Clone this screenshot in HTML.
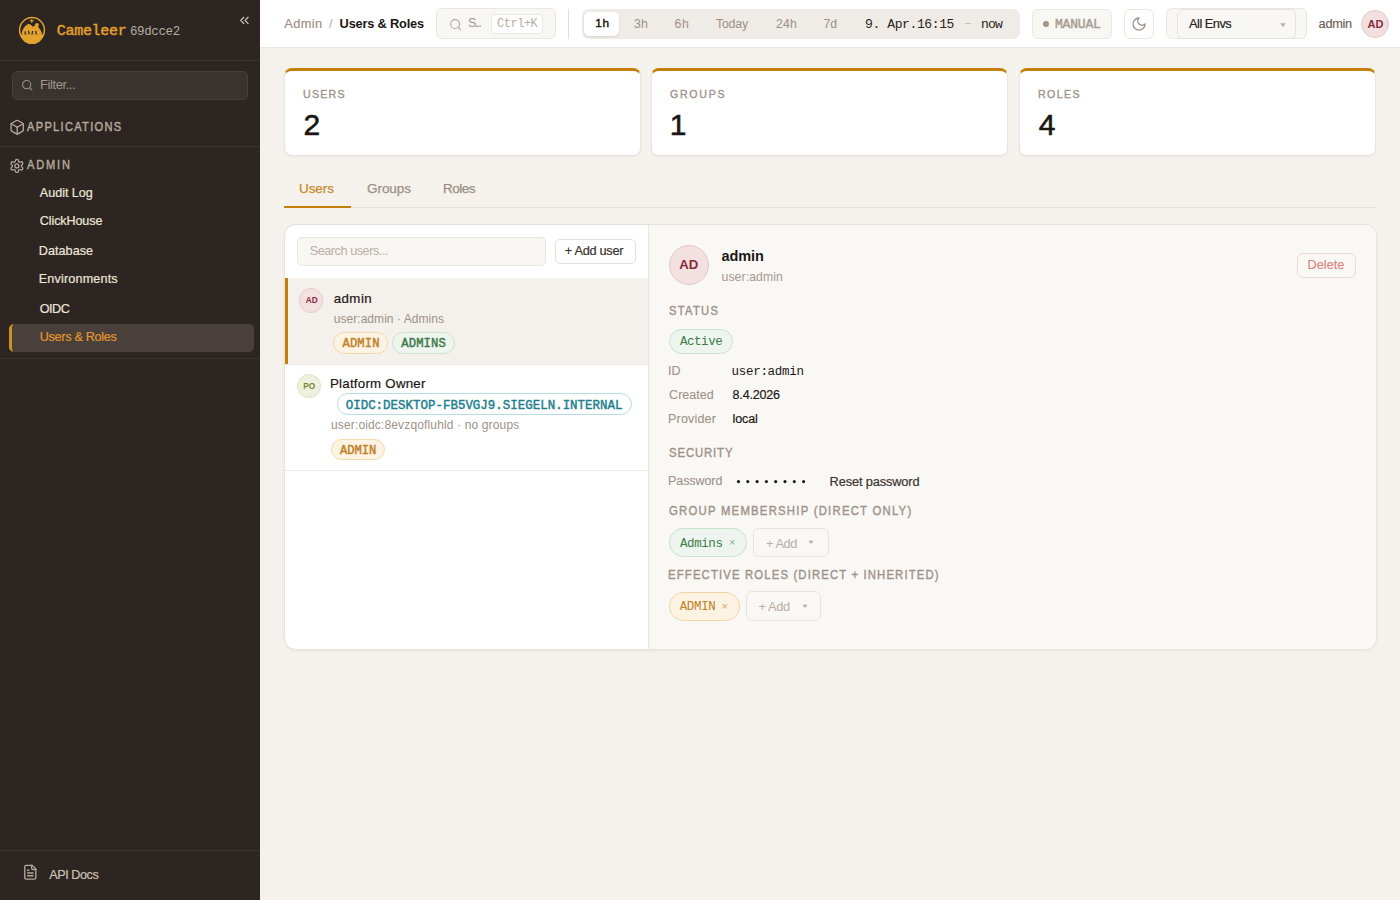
<!DOCTYPE html>
<html><head><meta charset="utf-8">
<style>
*{box-sizing:border-box;margin:0;padding:0}
html,body{width:1400px;height:900px;overflow:hidden}
body{font-family:"Liberation Sans",sans-serif;background:#f5f2ed;position:relative;color:#1c1714}
.abs{position:absolute}
#sb{position:absolute;left:0;top:0;width:260px;height:900px;background:#2d2521}
.sbline{position:absolute;left:0;width:260px;height:1px;background:#3b332e}
#top{position:absolute;left:260px;top:0;width:1140px;height:48px;background:#fff;border-bottom:1px solid #ebe6df}
.card{position:absolute;top:68px;width:357px;height:88px;background:#fff;border-radius:8px;border:1px solid #e9e4dd;border-top:3px solid #c47e0c;box-shadow:0 1px 2px rgba(60,40,20,.05)}
.pillb{position:absolute;border:1px solid;border-radius:11px}
.t{position:absolute;white-space:nowrap}
</style></head><body>

<div id="sb">
  <svg class="abs" style="left:18px;top:16px" width="28" height="28" viewBox="0 0 28 28">
    <circle cx="14" cy="14" r="12.4" fill="none" stroke="#e3a12e" stroke-width="1.5"/>
    <path d="M1.9 18.6 A12.4 12.4 0 0 0 26.1 18.6 Z" fill="#e3a12e"/>
    <path d="M3.6 18.8 C4 14 6.5 9.5 9.8 8.2 C11.8 7.6 13.2 8.8 14.3 10.6 L16.2 10.2 L17.8 7.2 L19.6 7 L21 8.6 L20.2 11 C22 12.6 23.6 15.4 24.2 18.8 Z" fill="#e3a12e"/>
    <path d="M13.8 2.6 l0.8 1.7 l1.8 0.6 l-1.8 0.6 l-0.8 1.7 l-0.8 -1.7 l-1.8 -0.6 l1.8 -0.6z" fill="#e3a12e"/>
    <path d="M7.2 15.2 v3.2 M10.4 14.6 l0.8 3.6 M14.6 15 l-0.6 3.4 M17.6 15 l0.8 3.2" stroke="#2d2521" stroke-width="1.2"/>
  </svg>
  <svg class="abs" style="left:236.90px;top:13.00px" width="14.80" height="14.80" viewBox="0 0 24 24" fill="none" stroke="#cbbfb3" stroke-width="2.10" stroke-linecap="round" stroke-linejoin="round"><path d="m11 17-5-5 5-5"/><path d="m18 17-5-5 5-5"/></svg>
  <div class="sbline" style="top:60px"></div>
  <div class="abs" style="left:12px;top:71px;width:236px;height:29px;background:#393330;border:1px solid #45403b;border-radius:5px"></div>
  <svg class="abs" style="left:21.00px;top:79.00px" width="12.40" height="12.40" viewBox="0 0 24 24" fill="none" stroke="#9d9188" stroke-width="2.10" stroke-linecap="round" stroke-linejoin="round"><circle cx="11" cy="11" r="8"/><path d="m21 21-4.3-4.3"/></svg>
  <svg class="abs" style="left:8.50px;top:119.20px" width="16.40" height="16.40" viewBox="0 0 24 24" fill="none" stroke="#b5a99e" stroke-width="1.90" stroke-linecap="round" stroke-linejoin="round"><path d="M21 8a2 2 0 0 0-1-1.73l-7-4a2 2 0 0 0-2 0l-7 4A2 2 0 0 0 3 8v8a2 2 0 0 0 1 1.73l7 4a2 2 0 0 0 2 0l7-4A2 2 0 0 0 21 16Z"/><path d="m3.3 7 8.7 5 8.7-5"/><path d="M12 22V12"/></svg>
  <div class="sbline" style="top:146px"></div>
  <svg class="abs" style="left:9.05px;top:158.00px" width="15.80" height="15.80" viewBox="0 0 24 24" fill="none" stroke="#b5a99e" stroke-width="1.90" stroke-linecap="round" stroke-linejoin="round"><path d="M12.22 2h-.44a2 2 0 0 0-2 2v.18a2 2 0 0 1-1 1.73l-.43.25a2 2 0 0 1-2 0l-.15-.08a2 2 0 0 0-2.73.73l-.22.38a2 2 0 0 0 .73 2.73l.15.1a2 2 0 0 1 1 1.72v.51a2 2 0 0 1-1 1.74l-.15.09a2 2 0 0 0-.73 2.73l.22.38a2 2 0 0 0 2.73.73l.15-.08a2 2 0 0 1 2 0l.43.25a2 2 0 0 1 1 1.73V20a2 2 0 0 0 2 2h.44a2 2 0 0 0 2-2v-.18a2 2 0 0 1 1-1.73l.43-.25a2 2 0 0 1 2 0l.15.08a2 2 0 0 0 2.73-.73l.22-.39a2 2 0 0 0-.73-2.73l-.15-.08a2 2 0 0 1-1-1.74v-.5a2 2 0 0 1 1-1.74l.15-.09a2 2 0 0 0 .73-2.73l-.22-.38a2 2 0 0 0-2.73-.73l-.15.08a2 2 0 0 1-2 0l-.43-.25a2 2 0 0 1-1-1.73V4a2 2 0 0 0-2-2z"/><circle cx="12" cy="12" r="3"/></svg>
  <div class="abs" style="left:9px;top:324px;width:245px;height:28px;background:#4a403b;border-radius:5px;border-left:3px solid #d18f1f"></div>
  <div class="sbline" style="top:358px"></div>
  <div class="sbline" style="top:850px"></div>
  <svg class="abs" style="left:21.70px;top:864.40px" width="16.60" height="16.60" viewBox="0 0 24 24" fill="none" stroke="#b5a99e" stroke-width="1.90" stroke-linecap="round" stroke-linejoin="round"><path d="M15 2H6a2 2 0 0 0-2 2v16a2 2 0 0 0 2 2h12a2 2 0 0 0 2-2V7Z"/><path d="M14 2v4a2 2 0 0 0 2 2h4"/><path d="M10 9H8"/><path d="M16 13H8"/><path d="M16 17H8"/></svg>
</div>
<div id="top"></div>
<div class="abs" style="left:436px;top:8px;width:120px;height:31px;background:#f9f7f4;border:1px solid #ebe6df;border-radius:6px"></div>
<svg class="abs" style="left:448.50px;top:18.20px" width="13.30" height="13.30" viewBox="0 0 24 24" fill="none" stroke="#b3a79d" stroke-width="2.00" stroke-linecap="round" stroke-linejoin="round"><circle cx="11" cy="11" r="8"/><path d="m21 21-4.3-4.3"/></svg>
<div class="abs" style="left:491px;top:13.5px;width:52px;height:20px;background:#fff;border:1px solid #ebe6df;border-radius:4px"></div>
<div class="abs" style="left:568px;top:9px;width:1px;height:30px;background:#e3ddd6"></div>
<div class="abs" style="left:582px;top:9px;width:438px;height:30px;background:#efebe6;border-radius:7px"></div>
<div class="abs" style="left:584px;top:12px;width:35px;height:24px;background:#fff;border-radius:5px;box-shadow:0 1px 2px rgba(60,40,20,.12)"></div>
<div class="abs" style="left:965px;top:23px;width:6px;height:1px;background:#c9c1b9"></div>
<div class="abs" style="left:1032px;top:8.5px;width:80px;height:30px;background:#f9f7f4;border:1px solid #ebe6df;border-radius:6px"></div>
<div class="abs" style="left:1043px;top:20.6px;width:6px;height:6px;background:#a09488;border-radius:3px"></div>
<div class="abs" style="left:1124px;top:8.5px;width:30px;height:30px;background:#fff;border:1px solid #ebe6df;border-radius:6px"></div>
<svg class="abs" style="left:1130.50px;top:16.00px" width="16.10" height="16.10" viewBox="0 0 24 24" fill="none" stroke="#9d9087" stroke-width="1.90" stroke-linecap="round" stroke-linejoin="round"><path d="M12 3a6 6 0 0 0 9 9 9 9 0 1 1-9-9Z"/></svg>
<div class="abs" style="left:1166px;top:8px;width:141px;height:31px;background:#f9f7f4;border:1px solid #ebe6df;border-radius:6px"></div>
<div class="abs" style="left:1177px;top:9px;width:119px;height:30px;background:#f9f7f4;border:1px solid #e8e2db;border-radius:6px"></div>
<svg class="abs" style="left:1279.5px;top:22.5px" width="6" height="5" viewBox="0 0 6 5"><path d="M0.3 0.3 H5.7 L3 4.3Z" fill="#b8ada3"/></svg>
<div class="abs" style="left:1361px;top:10px;width:28px;height:28px;background:#f2dfdf;border:1px solid #e8c9cb;border-radius:50%"></div>

<div class="card" style="left:284px"></div>
<div class="card" style="left:651px"></div>
<div class="card" style="left:1019px"></div>

<div class="abs" style="left:284px;top:207px;width:1092px;height:1px;background:#e9e3dc"></div>
<div class="abs" style="left:284px;top:206px;width:67px;height:2px;background:#c47e0c"></div>

<div class="abs" style="left:283.5px;top:223.5px;width:1093px;height:426px;background:#fff;border:1px solid #e6e1da;border-radius:12px;overflow:hidden;box-shadow:0 1px 3px rgba(60,40,20,.06)">
  <div class="abs" style="left:363px;top:0;width:730px;height:426px;background:#faf8f5;border-left:1px solid #e9e4dd"></div>
  <div class="abs" style="left:0;top:53px;width:363px;height:86px;background:#f4f0eb;border-left:3px solid #c47e0c"></div>
  <div class="abs" style="left:0;top:139px;width:363px;height:1px;background:#eee9e3"></div>
  <div class="abs" style="left:0;top:245.5px;width:363px;height:1px;background:#eee9e3"></div>
</div>
<div class="abs" style="left:296.5px;top:236.5px;width:249px;height:29px;background:#f9f7f4;border:1px solid #ebe5de;border-radius:5px"></div>
<div class="abs" style="left:554.5px;top:238.5px;width:81px;height:25px;background:#fff;border:1px solid #e6e0d8;border-radius:5px"></div>
<div class="abs" style="left:299px;top:288.3px;width:24.3px;height:24.3px;background:#f3e0e0;border:1px solid #e6c8ca;border-radius:50%"></div>
<div class="pillb" style="left:333px;top:332px;width:55px;height:21.5px;background:#fdf3e3;border-color:#f2d9b0"></div>
<div class="pillb" style="left:392px;top:332px;width:63px;height:21.5px;background:#eef5ee;border-color:#cfe3d0"></div>
<div class="abs" style="left:296.7px;top:373.9px;width:24.3px;height:24.3px;background:#eef0e0;border:1px solid #dde2c8;border-radius:50%"></div>
<div class="pillb" style="left:336.5px;top:393px;width:295px;height:22px;background:#fff;border-color:#b9dde4"></div>
<div class="pillb" style="left:330.7px;top:438.6px;width:54.6px;height:21px;background:#fdf3e3;border-color:#f2d9b0"></div>

<div class="abs" style="left:668.5px;top:245px;width:40.4px;height:40.4px;background:#f3e1e1;border:1px solid #e5c6c8;border-radius:50%"></div>
<div class="abs" style="left:1297px;top:252.5px;width:58.5px;height:25px;border:1px solid #f2d9d4;border-radius:6px"></div>
<div class="pillb" style="left:668.8px;top:328.6px;width:64.5px;height:25.2px;background:#eef5ee;border-color:#cbe3cc;border-radius:13px"></div>
<svg class="abs" style="left:735px;top:478px" width="72" height="8" viewBox="0 0 72 8"><circle cx="3.50" cy="3.6" r="1.55" fill="#1c1714"/><circle cx="12.80" cy="3.6" r="1.55" fill="#1c1714"/><circle cx="22.10" cy="3.6" r="1.55" fill="#1c1714"/><circle cx="31.40" cy="3.6" r="1.55" fill="#1c1714"/><circle cx="40.70" cy="3.6" r="1.55" fill="#1c1714"/><circle cx="50.00" cy="3.6" r="1.55" fill="#1c1714"/><circle cx="59.30" cy="3.6" r="1.55" fill="#1c1714"/><circle cx="68.60" cy="3.6" r="1.55" fill="#1c1714"/></svg>
<div class="pillb" style="left:668.6px;top:528.4px;width:78.4px;height:28.6px;background:#eef5ee;border-color:#c9e2ca;border-radius:14px"></div>
<div class="abs" style="left:753.4px;top:528px;width:75.2px;height:29px;border:1px solid #e8e4df;border-radius:6px"></div>
<svg class="abs" style="left:808px;top:540px" width="6" height="5" viewBox="0 0 6 5"><path d="M0.5 0.8 H5.5 L3 4Z" fill="#b8aea5"/></svg>
<div class="pillb" style="left:668.6px;top:591.5px;width:71.4px;height:29.1px;background:#fdf3e2;border-color:#f0d5a8;border-radius:14px"></div>
<div class="abs" style="left:746.4px;top:591px;width:75px;height:29.5px;border:1px solid #e8e4df;border-radius:6px"></div>
<svg class="abs" style="left:801.5px;top:603.5px" width="6" height="5" viewBox="0 0 6 5"><path d="M0.5 0.8 H5.5 L3 4Z" fill="#b8aea5"/></svg>

<div class="t" style='left:56.80px;top:21.50px;font:normal 15px/20px "Liberation Mono",monospace;color:#e3a12e;letter-spacing:-0.301px;-webkit-text-stroke:0.45px currentColor'>Cameleer</div>
<div class="t" style='left:130.00px;top:24.00px;font:normal 12.5px/16px "Liberation Mono",monospace;color:#b7aca2;letter-spacing:-0.385px'>69dcce2</div>
<div class="t" style='left:40.00px;top:76.00px;font:normal 13px/17px "Liberation Sans",sans-serif;color:#a0958b;letter-spacing:-0.424px'>Filter...</div>
<div class="t" style='left:27.40px;top:119.00px;font:normal 12.3px/16px "Liberation Sans",sans-serif;color:#b8ab9f;letter-spacing:1.458px;-webkit-text-stroke:0.4px currentColor;transform:scaleX(0.900);transform-origin:0.00px 0'>APPLICATIONS</div>
<div class="t" style='left:27.40px;top:157.00px;font:normal 12.3px/16px "Liberation Sans",sans-serif;color:#b8ab9f;letter-spacing:2.037px;-webkit-text-stroke:0.4px currentColor;transform:scaleX(0.900);transform-origin:0.00px 0'>ADMIN</div>
<div class="t" style='left:39.80px;top:184.90px;font:normal 12.6px/16px "Liberation Sans",sans-serif;color:#ede5db;letter-spacing:-0.026px;-webkit-text-stroke:0.2px currentColor'>Audit Log</div>
<div class="t" style='left:39.80px;top:212.90px;font:normal 12.6px/16px "Liberation Sans",sans-serif;color:#ede5db;letter-spacing:-0.120px;-webkit-text-stroke:0.2px currentColor'>ClickHouse</div>
<div class="t" style='left:38.80px;top:242.70px;font:normal 12.6px/16px "Liberation Sans",sans-serif;color:#ede5db;letter-spacing:0.056px;-webkit-text-stroke:0.2px currentColor'>Database</div>
<div class="t" style='left:38.80px;top:271.00px;font:normal 12.6px/16px "Liberation Sans",sans-serif;color:#ede5db;letter-spacing:0.164px;-webkit-text-stroke:0.2px currentColor'>Environments</div>
<div class="t" style='left:39.80px;top:301.00px;font:normal 12.6px/16px "Liberation Sans",sans-serif;color:#ede5db;letter-spacing:-0.500px;-webkit-text-stroke:0.2px currentColor'>OIDC</div>
<div class="t" style='left:39.80px;top:329.10px;font:normal 12.6px/16px "Liberation Sans",sans-serif;color:#e3962a;letter-spacing:-0.290px;-webkit-text-stroke:0.2px currentColor'>Users &amp; Roles</div>
<div class="t" style='left:49.20px;top:867.40px;font:normal 12.6px/16px "Liberation Sans",sans-serif;color:#cdc2b6;letter-spacing:-0.428px;-webkit-text-stroke:0.2px currentColor'>API Docs</div>
<div class="t" style='left:284.30px;top:14.90px;font:normal 12.8px/17px "Liberation Sans",sans-serif;color:#9d9087;letter-spacing:0.386px;-webkit-text-stroke:0.2px currentColor'>Admin</div>
<div class="t" style='left:329.00px;top:14.90px;font:normal 12.8px/17px "Liberation Sans",sans-serif;color:#b5aba2'>/</div>
<div class="t" style='left:339.60px;top:14.90px;font:bold 12.8px/17px "Liberation Sans",sans-serif;color:#1c1714;letter-spacing:-0.188px'>Users &amp; Roles</div>
<div class="t" style='left:467.90px;top:14.90px;font:normal 12.5px/16px "Liberation Sans",sans-serif;color:#a09489;letter-spacing:-1.594px'>S...</div>
<div class="t" style='left:497.00px;top:16.10px;font:normal 12px/16px "Liberation Mono",monospace;color:#b8aea4;letter-spacing:-0.481px'>Ctrl+K</div>
<div class="t" style='left:595.30px;top:16.30px;font:normal 11.8px/15px "Liberation Sans",sans-serif;color:#1c1714;-webkit-text-stroke:0.45px currentColor;letter-spacing:0.7px'>1h</div>
<div class="t" style='left:634.00px;top:15.80px;font:normal 12.3px/16px "Liberation Sans",sans-serif;color:#9d9087;letter-spacing:0.161px'>3h</div>
<div class="t" style='left:674.50px;top:15.80px;font:normal 12.3px/16px "Liberation Sans",sans-serif;color:#9d9087;letter-spacing:0.661px'>6h</div>
<div class="t" style='left:716.00px;top:15.90px;font:normal 12.3px/16px "Liberation Sans",sans-serif;color:#9d9087;letter-spacing:-0.191px'>Today</div>
<div class="t" style='left:776.00px;top:15.90px;font:normal 12.3px/16px "Liberation Sans",sans-serif;color:#9d9087;letter-spacing:0.111px'>24h</div>
<div class="t" style='left:823.40px;top:15.90px;font:normal 12.3px/16px "Liberation Sans",sans-serif;color:#9d9087'>7d</div>
<div class="t" style='left:865.00px;top:15.90px;font:normal 13px/17px "Liberation Mono",monospace;color:#2a2420;letter-spacing:-0.383px'>9. Apr.16:15</div>
<div class="t" style='left:981.00px;top:15.90px;font:normal 13px/17px "Liberation Mono",monospace;color:#2a2420;letter-spacing:-0.801px'>now</div>
<div class="t" style='left:1055.00px;top:15.90px;font:normal 13px/17px "Liberation Mono",monospace;color:#a89c90;letter-spacing:-0.201px;-webkit-text-stroke:0.45px currentColor'>MANUAL</div>
<div class="t" style='left:1189.00px;top:15.20px;font:normal 12.8px/17px "Liberation Sans",sans-serif;color:#2a2420;letter-spacing:-0.500px;-webkit-text-stroke:0.2px currentColor'>All Envs</div>
<div class="t" style='left:1318.60px;top:14.50px;font:normal 12.8px/17px "Liberation Sans",sans-serif;color:#6b6058;letter-spacing:-0.334px;-webkit-text-stroke:0.15px currentColor'>admin</div>
<div class="t" style='left:1367.50px;top:17.30px;font:bold 11px/14px "Liberation Sans",sans-serif;color:#8a2d3a'>AD</div>
<div class="t" style='left:302.80px;top:87.40px;font:normal 11.8px/15px "Liberation Sans",sans-serif;color:#a0948a;letter-spacing:1.362px;-webkit-text-stroke:0.4px currentColor;transform:scaleX(0.900);transform-origin:0.00px 0'>USERS</div>
<div class="t" style='left:670.00px;top:87.40px;font:normal 11.8px/15px "Liberation Sans",sans-serif;color:#a0948a;letter-spacing:1.882px;-webkit-text-stroke:0.4px currentColor;transform:scaleX(0.900);transform-origin:0.00px 0'>GROUPS</div>
<div class="t" style='left:1037.60px;top:87.40px;font:normal 11.8px/15px "Liberation Sans",sans-serif;color:#a0948a;letter-spacing:1.580px;-webkit-text-stroke:0.4px currentColor;transform:scaleX(0.900);transform-origin:0.00px 0'>ROLES</div>
<div class="t" style='left:303.40px;top:105.30px;font:normal 30px/39px "Liberation Sans",sans-serif;color:#1c1714;-webkit-text-stroke:0.6px currentColor'>2</div>
<div class="t" style='left:669.80px;top:105.30px;font:normal 30px/39px "Liberation Sans",sans-serif;color:#1c1714;-webkit-text-stroke:0.6px currentColor'>1</div>
<div class="t" style='left:1038.70px;top:105.30px;font:normal 30px/39px "Liberation Sans",sans-serif;color:#1c1714;-webkit-text-stroke:0.6px currentColor'>4</div>
<div class="t" style='left:299.00px;top:179.80px;font:normal 13.5px/18px "Liberation Sans",sans-serif;color:#c98a2a;letter-spacing:-0.076px;-webkit-text-stroke:0.25px currentColor'>Users</div>
<div class="t" style='left:367.00px;top:179.80px;font:normal 13.5px/18px "Liberation Sans",sans-serif;color:#9a8e85;letter-spacing:-0.044px;-webkit-text-stroke:0.25px currentColor'>Groups</div>
<div class="t" style='left:443.00px;top:179.80px;font:normal 13.5px/18px "Liberation Sans",sans-serif;color:#9a8e85;letter-spacing:-0.491px;-webkit-text-stroke:0.25px currentColor'>Roles</div>
<div class="t" style='left:309.70px;top:243.00px;font:normal 12.6px/16px "Liberation Sans",sans-serif;color:#b9aea5;letter-spacing:-0.421px'>Search users...</div>
<div class="t" style='left:564.70px;top:242.00px;font:normal 12.8px/17px "Liberation Sans",sans-serif;color:#3b332e;letter-spacing:-0.298px;-webkit-text-stroke:0.2px currentColor'>+ Add user</div>
<div class="t" style='left:305.80px;top:295.00px;font:bold 8.3px/11px "Liberation Sans",sans-serif;color:#8a2d3a'>AD</div>
<div class="t" style='left:333.70px;top:289.80px;font:normal 13.3px/17px "Liberation Sans",sans-serif;color:#1c1714;letter-spacing:0.445px;-webkit-text-stroke:0.2px currentColor'>admin</div>
<div class="t" style='left:333.70px;top:310.80px;font:normal 12px/16px "Liberation Sans",sans-serif;color:#9d9289;letter-spacing:0.053px'>user:admin · Admins</div>
<div class="t" style='left:342.50px;top:335.70px;font:normal 12.2px/16px "Liberation Mono",monospace;color:#c0812a;letter-spacing:0.111px;-webkit-text-stroke:0.45px currentColor'>ADMIN</div>
<div class="t" style='left:401.30px;top:335.70px;font:normal 12.2px/16px "Liberation Mono",monospace;color:#3d7a4a;letter-spacing:0.126px;-webkit-text-stroke:0.45px currentColor'>ADMINS</div>
<div class="t" style='left:303.30px;top:380.50px;font:bold 8.3px/11px "Liberation Sans",sans-serif;color:#7a842e'>PO</div>
<div class="t" style='left:330.00px;top:374.90px;font:normal 13.3px/17px "Liberation Sans",sans-serif;color:#1c1714;letter-spacing:0.236px;-webkit-text-stroke:0.2px currentColor'>Platform Owner</div>
<div class="t" style='left:345.70px;top:397.60px;font:normal 12.45px/16px "Liberation Mono",monospace;color:#1f7f8f;letter-spacing:0.017px;-webkit-text-stroke:0.45px currentColor'>OIDC:DESKTOP-FB5VGJ9.SIEGELN.INTERNAL</div>
<div class="t" style='left:331.00px;top:416.60px;font:normal 12px/16px "Liberation Sans",sans-serif;color:#9d9289;letter-spacing:0.144px'>user:oidc:8evzqofluhld · no groups</div>
<div class="t" style='left:340.00px;top:442.90px;font:normal 12.2px/16px "Liberation Mono",monospace;color:#c0812a;letter-spacing:-0.064px;-webkit-text-stroke:0.45px currentColor'>ADMIN</div>
<div class="t" style='left:679.30px;top:256.00px;font:bold 13.2px/17px "Liberation Sans",sans-serif;color:#8a2a3a'>AD</div>
<div class="t" style='left:721.50px;top:247.30px;font:bold 14.5px/19px "Liberation Sans",sans-serif;color:#1c1714;letter-spacing:-0.086px'>admin</div>
<div class="t" style='left:721.50px;top:268.80px;font:normal 12.2px/16px "Liberation Sans",sans-serif;color:#a29790;letter-spacing:0.110px'>user:admin</div>
<div class="t" style='left:1307.60px;top:257.30px;font:normal 12.6px/16px "Liberation Sans",sans-serif;color:#d8847a;letter-spacing:0.060px;-webkit-text-stroke:0.15px currentColor'>Delete</div>
<div class="t" style='left:669.20px;top:302.90px;font:normal 12.4px/16px "Liberation Sans",sans-serif;color:#9d9289;letter-spacing:1.467px;-webkit-text-stroke:0.4px currentColor;transform:scaleX(0.900);transform-origin:0.00px 0'>STATUS</div>
<div class="t" style='left:680.00px;top:334.10px;font:normal 12.5px/16px "Liberation Mono",monospace;color:#3b7a4a;letter-spacing:-0.461px'>Active</div>
<div class="t" style='left:668.10px;top:363.00px;font:normal 12.5px/16px "Liberation Sans",sans-serif;color:#9d9289;-webkit-text-stroke:0.1px currentColor'>ID</div>
<div class="t" style='left:669.10px;top:386.80px;font:normal 12.5px/16px "Liberation Sans",sans-serif;color:#9d9289;letter-spacing:0.014px;-webkit-text-stroke:0.1px currentColor'>Created</div>
<div class="t" style='left:668.10px;top:411.00px;font:normal 12.5px/16px "Liberation Sans",sans-serif;color:#9d9289;letter-spacing:0.174px;-webkit-text-stroke:0.1px currentColor'>Provider</div>
<div class="t" style='left:731.60px;top:364.00px;font:normal 12.5px/16px "Liberation Mono",monospace;color:#1c1714;letter-spacing:-0.301px'>user:admin</div>
<div class="t" style='left:732.60px;top:386.80px;font:normal 12.5px/16px "Liberation Sans",sans-serif;color:#1c1714;letter-spacing:-0.186px;-webkit-text-stroke:0.2px currentColor'>8.4.2026</div>
<div class="t" style='left:732.60px;top:411.00px;font:normal 12.5px/16px "Liberation Sans",sans-serif;color:#1c1714;letter-spacing:-0.133px;-webkit-text-stroke:0.2px currentColor'>local</div>
<div class="t" style='left:669.00px;top:445.40px;font:normal 12.6px/16px "Liberation Sans",sans-serif;color:#9d9289;letter-spacing:0.976px;-webkit-text-stroke:0.4px currentColor;transform:scaleX(0.900);transform-origin:0.00px 0'>SECURITY</div>
<div class="t" style='left:668.00px;top:473.40px;font:normal 12.5px/16px "Liberation Sans",sans-serif;color:#9d9289;letter-spacing:-0.076px;-webkit-text-stroke:0.1px currentColor'>Password</div>
<div class="t" style='left:829.60px;top:473.00px;font:normal 12.8px/17px "Liberation Sans",sans-serif;color:#3b332e;letter-spacing:-0.141px;-webkit-text-stroke:0.2px currentColor'>Reset password</div>
<div class="t" style='left:669.00px;top:503.40px;font:normal 12.6px/16px "Liberation Sans",sans-serif;color:#9d9289;letter-spacing:1.372px;-webkit-text-stroke:0.4px currentColor;transform:scaleX(0.900);transform-origin:0.00px 0'>GROUP MEMBERSHIP (DIRECT ONLY)</div>
<div class="t" style='left:680.00px;top:536.00px;font:normal 12.5px/16px "Liberation Mono",monospace;color:#3d7a4a;letter-spacing:-0.421px'>Admins</div>
<div class="t" style='left:729.00px;top:535.00px;font:normal 11px/14px "Liberation Sans",sans-serif;color:#8ab08f'>×</div>
<div class="t" style='left:766.00px;top:534.50px;font:normal 12.8px/17px "Liberation Sans",sans-serif;color:#b8aea5;letter-spacing:-0.420px'>+ Add</div>
<div class="t" style='left:668.10px;top:566.60px;font:normal 12.6px/16px "Liberation Sans",sans-serif;color:#9d9289;letter-spacing:1.266px;-webkit-text-stroke:0.4px currentColor;transform:scaleX(0.900);transform-origin:1.00px 0'>EFFECTIVE ROLES (DIRECT + INHERITED)</div>
<div class="t" style='left:679.70px;top:599.40px;font:normal 12.5px/16px "Liberation Mono",monospace;color:#c0802a;letter-spacing:-0.351px'>ADMIN</div>
<div class="t" style='left:721.50px;top:598.50px;font:normal 11px/14px "Liberation Sans",sans-serif;color:#d4a870'>×</div>
<div class="t" style='left:758.60px;top:598.00px;font:normal 12.8px/17px "Liberation Sans",sans-serif;color:#b8aea5;letter-spacing:-0.420px'>+ Add</div>
</body></html>
